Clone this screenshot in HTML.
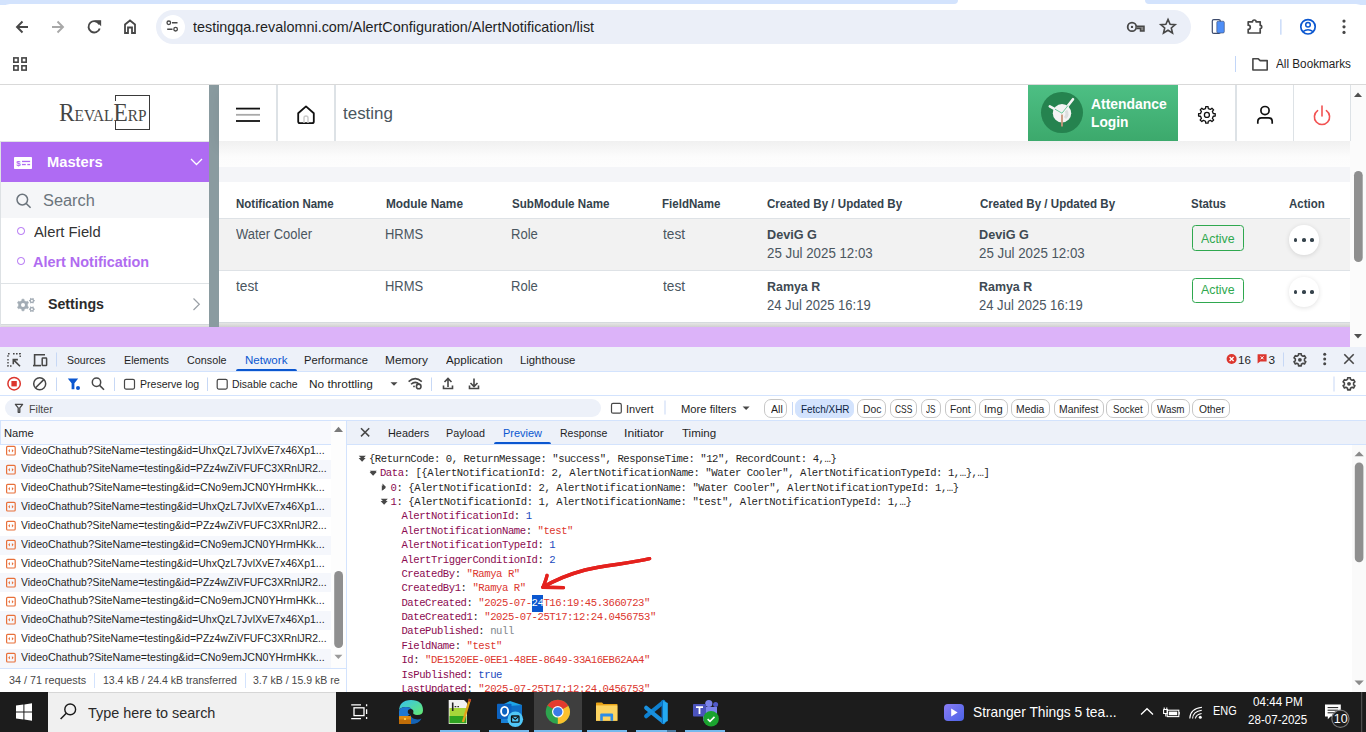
<!DOCTYPE html>
<html><head><meta charset="utf-8">
<style>
*{box-sizing:border-box;margin:0;padding:0}
html,body{width:1366px;height:732px;overflow:hidden;background:#fff;font-family:"Liberation Sans",sans-serif;position:relative}
.a{position:absolute}
.t{position:absolute;white-space:nowrap;line-height:1}
svg{position:absolute;overflow:visible}
.badge{width:52px;height:25.5px;border:1.2px solid #2fa84f;border-radius:3.5px}
.dots{width:29.5px;height:29.5px;border-radius:50%;background:#fff;box-shadow:0 1px 5px rgba(0,0,0,0.12)}
.dots i{position:absolute;top:12.9px;width:3.7px;height:3.7px;border-radius:50%;background:#36434c}
.dots i:nth-child(1){left:4.7px}.dots i:nth-child(2){left:12.9px}.dots i:nth-child(3){left:21.2px}
.fb{position:absolute;top:399px;height:18.6px;border:1px solid #c7c7c7;border-radius:7px}
</style></head><body>
<!-- ===== CHROME ===== -->
<div class="a" style="left:0;top:0;width:1366px;height:5px;background:#d3e3fd"></div>
<div class="a" style="left:950px;top:0;width:200px;height:6px;background:#fff;border-radius:0 0 0 0"></div>
<div class="a" style="left:942px;top:0;width:16px;height:4px;background:#d3e3fd;border-radius:0 0 10px 0"></div>
<div class="a" style="left:1145px;top:0;width:16px;height:4px;background:#d3e3fd;border-radius:0 0 0 10px"></div>
<div class="a" style="left:0;top:4px;width:1366px;height:80px;background:#fff;border-radius:10px 10px 0 0"></div>
<!-- nav icons -->
<svg style="left:0;top:0" width="160" height="50">
 <path d="M28 27H17.5M22.5 21.5L17 27L22.5 32.5" fill="none" stroke="#474747" stroke-width="1.9"/>
 <path d="M52 27H62.5M57.5 21.5L63 27L57.5 32.5" fill="none" stroke="#a8a8a8" stroke-width="1.9"/>
 <path d="M99.3 24.2A5.7 5.7 0 1 0 99.7 28.5" fill="none" stroke="#474747" stroke-width="1.9"/>
 <path d="M96.5 20.8L100.5 20.8L100.5 24.8Z" fill="#474747" stroke="#474747" stroke-width="1.3"/>
 <path d="M125 33V24.5L130 20.5L135 24.5V33H132V27.5H128V33Z" fill="none" stroke="#474747" stroke-width="1.8" stroke-linejoin="miter"/>
</svg>
<!-- omnibox -->
<div class="a" style="left:156px;top:10px;width:1035px;height:34px;border-radius:17px;background:#ebeff8"></div>
<div class="a" style="left:161px;top:15px;width:24px;height:24px;border-radius:12px;background:#fff"></div>
<svg style="left:160px;top:14px" width="26" height="26">
 <circle cx="8.8" cy="8.8" r="1.8" fill="none" stroke="#474747" stroke-width="1.3"/>
 <path d="M12 8.8H17.5M7.2 15.2H12.5" stroke="#474747" stroke-width="1.5"/>
 <circle cx="15.6" cy="15.2" r="1.8" fill="none" stroke="#474747" stroke-width="1.3"/>
</svg>
<svg style="left:1110px;top:10px" width="256" height="40">
 <circle cx="22" cy="16.9" r="4.3" fill="none" stroke="#474747" stroke-width="1.8"/>
 <circle cx="22" cy="16.9" r="1.2" fill="#474747"/>
 <path d="M26.5 16.2H34V21H30.5V18.6H26.5" fill="#8a8a8a" stroke="#474747" stroke-width="1.5"/>
 <path d="M58 9.4L60.1 14.2L65.2 14.6L61.3 18L62.5 23L58 20.3L53.5 23L54.7 18L50.8 14.6L55.9 14.2Z" fill="none" stroke="#474747" stroke-width="1.6" stroke-linejoin="miter"/>
 <rect x="102.3" y="9.6" width="8" height="13.8" rx="1.5" fill="#fff" stroke="#3c4a6b" stroke-width="1.2"/>
 <rect x="106.8" y="11.2" width="7.5" height="11.8" rx="1.3" fill="#4e8ef7" stroke="#3c4a6b" stroke-width="0.6"/>
 <path d="M138.2 11.8H142.5A1.8 1.8 0 0 1 146.1 11.8H150.2V15.3A1.6 1.6 0 0 1 150.2 18.5V23H138.2V19.4A2.1 2.1 0 0 0 138.2 15.2Z" fill="none" stroke="#474747" stroke-width="1.7" stroke-linejoin="round"/>
 <rect x="170.2" y="9.3" width="1.3" height="15.4" fill="#c2d6f8"/>
 <circle cx="198" cy="16.8" r="7.2" fill="none" stroke="#0b57d0" stroke-width="1.7"/>
 <circle cx="198" cy="14.8" r="2.3" fill="none" stroke="#0b57d0" stroke-width="1.5"/>
 <path d="M193 21.6Q198 17.8 203 21.6" fill="none" stroke="#0b57d0" stroke-width="1.5"/>
 <circle cx="234" cy="11.1" r="1.6" fill="#474747"/><circle cx="234" cy="16.8" r="1.6" fill="#474747"/><circle cx="234" cy="22.4" r="1.6" fill="#474747"/>
</svg>
<!-- bookmarks bar -->
<svg style="left:0;top:48px" width="40" height="30">
 <rect x="13.8" y="9.9" width="4.3" height="4.3" fill="none" stroke="#474747" stroke-width="1.6"/>
 <rect x="21.9" y="9.9" width="4.3" height="4.3" fill="none" stroke="#474747" stroke-width="1.6"/>
 <rect x="13.8" y="17.8" width="4.3" height="4.3" fill="none" stroke="#474747" stroke-width="1.6"/>
 <rect x="21.9" y="17.8" width="4.3" height="4.3" fill="none" stroke="#474747" stroke-width="1.6"/>
</svg>
<div class="a" style="left:1235px;top:56px;width:1.2px;height:16px;background:#c2d6f8"></div>
<svg style="left:1250px;top:55px" width="22" height="18">
 <path d="M2.9 3.8H8.3L10.2 5.6H17.2V15H2.9Z" fill="none" stroke="#474747" stroke-width="1.6" stroke-linejoin="round"/>
</svg>
<div class="a" style="left:0;top:84px;width:1366px;height:1px;background:#d9d9d9"></div>

<!-- ===== PAGE ===== -->
<div class="a" style="left:0;top:85px;width:1350px;height:262px;background:#fff;overflow:hidden">
 <!-- sidebar -->
 <div class="a" style="left:0;top:55.5px;width:209px;height:1.5px;background:#dfe3e6"></div>
 <!-- logo -->
 <div class="a" style="left:114.8px;top:10.3px;width:35.2px;height:34.3px;border:1.5px solid #3a3a3a"></div>
 <div class="a" style="left:112px;top:16px;width:8px;height:20px;background:#fff"></div>
 <!-- masters -->
 <div class="a" style="left:0;top:57px;width:209px;height:40px;background:#af6bf3"></div>
 <svg style="left:0;top:57px" width="40" height="40">
  <rect x="14" y="15" width="18" height="12" rx="0.8" fill="#fff"/>
  <text x="18.5" y="23.7" text-anchor="middle" font-size="8" font-family="Liberation Sans" font-weight="bold" fill="#af6bf3">$</text>
  <rect x="22" y="18.8" width="8.1" height="1.3" fill="#af6bf3"/>
  <rect x="22" y="21.9" width="3.8" height="1.3" fill="#af6bf3"/>
  <rect x="27.3" y="21.9" width="2.8" height="1.3" fill="#af6bf3"/>
 </svg>
 <svg style="left:185px;top:67px" width="24" height="20">
  <path d="M6 7L11.5 12.5L17 7" fill="none" stroke="#fff" stroke-width="1.3"/>
 </svg>
 <!-- search -->
 <div class="a" style="left:0;top:97px;width:209px;height:35.5px;background:#f5f6f8"></div>
 <svg style="left:10px;top:103px" width="30" height="26">
  <circle cx="12.3" cy="11.6" r="5.3" fill="none" stroke="#6c757d" stroke-width="1.5"/>
  <path d="M16.2 15.5L20.6 19.8" stroke="#6c757d" stroke-width="1.6"/>
 </svg>
 <!-- submenu -->
 <div class="a" style="left:17.4px;top:142px;width:7.6px;height:7.6px;border-radius:50%;border:1.4px solid #af6bf3"></div>
 <div class="a" style="left:17.4px;top:172.4px;width:7.6px;height:7.6px;border-radius:50%;border:1.4px solid #af6bf3"></div>
 <div class="a" style="left:0;top:198px;width:209px;height:1px;background:#dfe3e6"></div>
 <!-- settings -->
 <svg style="left:12px;top:210px" width="30" height="22">
  <path d="M9.79 5.67L9.96 4.19L12.04 4.19L12.21 5.67L14.15 6.78L15.51 6.19L16.55 8.00L15.36 8.88L15.36 11.12L16.55 12.00L15.51 13.81L14.15 13.22L12.21 14.33L12.04 15.81L9.96 15.81L9.79 14.33L7.85 13.22L6.49 13.81L5.45 12.00L6.64 11.12L6.64 8.88L5.45 8.00L6.49 6.19L7.85 6.78Z" fill="#a3acb5" stroke="#a3acb5" stroke-width="0.6" stroke-linejoin="round"/>
  <circle cx="11" cy="10" r="2" fill="#fff"/>
  <path d="M20.45 3.47L20.89 2.87L21.86 3.43L21.56 4.11L22.11 5.06L22.85 5.14L22.85 6.26L22.11 6.34L21.56 7.29L21.86 7.97L20.89 8.53L20.45 7.93L19.35 7.93L18.91 8.53L17.94 7.97L18.24 7.29L17.69 6.34L16.95 6.26L16.95 5.14L17.69 5.06L18.24 4.11L17.94 3.43L18.91 2.87L19.35 3.47Z" fill="#a3acb5"/>
  <circle cx="19.9" cy="5.7" r="1" fill="#fff"/>
  <path d="M20.45 11.97L20.89 11.37L21.86 11.93L21.56 12.61L22.11 13.56L22.85 13.64L22.85 14.76L22.11 14.84L21.56 15.79L21.86 16.47L20.89 17.03L20.45 16.43L19.35 16.43L18.91 17.03L17.94 16.47L18.24 15.79L17.69 14.84L16.95 14.76L16.95 13.64L17.69 13.56L18.24 12.61L17.94 11.93L18.91 11.37L19.35 11.97Z" fill="#a3acb5"/>
  <circle cx="19.9" cy="14.2" r="1" fill="#fff"/>
 </svg>
 <svg style="left:186px;top:208px" width="20" height="24">
  <path d="M7.5 5.5L13.3 11.3L7.5 17" fill="none" stroke="#9aa0a6" stroke-width="1.2"/>
 </svg>
 <div class="a" style="left:0;top:239px;width:209px;height:1px;background:#d5d9dc"></div>
 <div class="a" style="left:0;top:240px;width:209px;height:2px;background:linear-gradient(#e8e8e8,#d8d8d8)"></div>
 <div class="a" style="left:0;top:56px;width:1px;height:186px;background:#dde1e4"></div>
 <!-- sidebar scroll bar -->
 <div class="a" style="left:209px;top:0;width:10px;height:242px;background:#8a9ba0"></div>

 <!-- header -->
 <div class="a" style="left:219px;top:0;width:1131px;height:56px;background:#fff;box-shadow:0 6px 14px rgba(0,0,0,0.07)"></div>
 <div class="a" style="left:219px;top:56px;width:1131px;height:26px;background:linear-gradient(#f0f0f0,#fcfcfc 60%,#fdfdfd)"></div>
 <div class="a" style="left:219px;top:82px;width:1131px;height:15px;background:#f4f5f8"></div>
 <div class="a" style="left:276px;top:0;width:1.5px;height:56px;background:#dde2e6"></div>
 <div class="a" style="left:334px;top:0;width:1.5px;height:56px;background:#dde2e6"></div>
 <svg style="left:230px;top:15px" width="36" height="30">
  <path d="M6 8.6H30" stroke="#111" stroke-width="1.8"/>
  <path d="M6 14.8H30" stroke="#a9a9a9" stroke-width="1.8"/>
  <path d="M6 21H30" stroke="#111" stroke-width="1.8"/>
 </svg>
 <svg style="left:290px;top:15px" width="32" height="30">
  <path d="M8.2 13.2L16 6.4L23.8 13.2V21.5Q23.8 23.2 22.1 23.2H9.9Q8.2 23.2 8.2 21.5Z" fill="none" stroke="#111" stroke-width="1.8" stroke-linejoin="round"/>
  <path d="M14 23V17.8Q14 16 16 16Q18 16 18 17.8V23" fill="none" stroke="#c9c9c9" stroke-width="1.4"/>
 </svg>
 <!-- attendance btn -->
 <div class="a" style="left:1028px;top:0;width:150px;height:56px;background:linear-gradient(#4dbf84,#3ca96c)"></div>
 <div class="a" style="left:1041px;top:6.8px;width:41.6px;height:41.6px;border-radius:50%;background:#25834f"></div>
 <svg style="left:1040px;top:6px" width="44" height="44">
  <circle cx="22" cy="22.2" r="9.2" fill="#f4f4f4"/>
  <path d="M26 19.5A6 6 0 0 1 25 27" fill="none" stroke="#dcdede" stroke-width="3"/>
  <path d="M22 22.2V35.5" stroke="#c9967a" stroke-width="1.8"/>
  <path d="M22 22.2L33 8.2" stroke="#f4f4f4" stroke-width="2.6" stroke-linecap="round"/>
  <path d="M22 22.2L9.8 15.3" stroke="#f4f4f4" stroke-width="2.6" stroke-linecap="round"/>
  <path d="M22 22.2L28 14.5M22 22.2L15 18.2" stroke="#4dbf84" stroke-width="0.8"/>
 </svg>
 <div class="a" style="left:1235.3px;top:0;width:1.5px;height:56px;background:#dde2e6"></div>
 <div class="a" style="left:1292.6px;top:0;width:1.5px;height:56px;background:#dde2e6"></div>
 <svg style="left:1192px;top:15px" width="30" height="30">
  <path d="M13.53 8.55L13.72 6.58L16.08 6.58L16.27 8.55L18.43 9.44L19.94 8.18L21.62 9.86L20.36 11.37L21.25 13.53L23.22 13.72L23.22 16.08L21.25 16.27L20.36 18.43L21.62 19.94L19.94 21.62L18.43 20.36L16.27 21.25L16.08 23.22L13.72 23.22L13.53 21.25L11.37 20.36L9.86 21.62L8.18 19.94L9.44 18.43L8.55 16.27L6.58 16.08L6.58 13.72L8.55 13.53L9.44 11.37L8.18 9.86L9.86 8.18L11.37 9.44Z" fill="none" stroke="#111" stroke-width="1.3" stroke-linejoin="round"/>
  <circle cx="14.9" cy="14.9" r="2.5" fill="none" stroke="#111" stroke-width="1.3"/>
 </svg>
 <svg style="left:1250px;top:15px" width="30" height="30">
  <circle cx="15" cy="10.6" r="4.1" fill="none" stroke="#111" stroke-width="1.7"/>
  <path d="M7.8 23.7V21.6Q7.8 17.8 11.6 17.8H18.4Q22.2 17.8 22.2 21.6V23.7" fill="none" stroke="#111" stroke-width="1.7"/>
 </svg>
 <svg style="left:1307px;top:15px" width="30" height="30">
  <path d="M10.6 10.7A7.6 7.6 0 1 0 19.4 10.7" fill="none" stroke="#f25252" stroke-width="1.6" stroke-linecap="round"/>
  <path d="M15 6V16" stroke="#f25252" stroke-width="1.6" stroke-linecap="round"/>
 </svg>

 <!-- table -->
 <div class="a" style="left:219px;top:97px;width:1131px;height:140px;background:#fff"></div>
 <div class="a" style="left:219px;top:133px;width:1131px;height:1px;background:#dee2e6"></div>
 <div class="a" style="left:219px;top:134px;width:1131px;height:51px;background:#f2f2f2"></div>
 <div class="a" style="left:219px;top:185px;width:1131px;height:1px;background:#dee2e6"></div>
 <div class="a badge" style="left:1192px;top:140.3px"></div>
 <div class="a dots" style="left:1289px;top:140.4px"><i></i><i></i><i></i></div>
 <div class="a badge" style="left:1192px;top:192.5px"></div>
 <div class="a dots" style="left:1289px;top:192.4px"><i></i><i></i><i></i></div>
 <div class="a" style="left:219px;top:237px;width:1131px;height:1px;background:#d5dadd"></div>
 <div class="a" style="left:219px;top:238px;width:1131px;height:4px;background:linear-gradient(#e6e6e6,#d0d0d0)"></div>
 <!-- purple band -->
 <div class="a" style="left:0;top:242px;width:1350px;height:20px;background:#dcb3f9"></div>
</div>
<!-- page scrollbar -->
<div class="a" style="left:1350px;top:85px;width:16px;height:262px;background:#fbfbfb"></div><div class="a" style="left:1349.5px;top:85px;width:1px;height:56px;background:#dde2e6"></div>
<svg style="left:1350px;top:85px" width="16" height="262">
 <path d="M4 12L8 7.5L12 12Z" fill="#505050"/>
 <rect x="4" y="86" width="8.7" height="91" rx="4.3" fill="#8f8f8f"/>
 <path d="M4 249L8 253.5L12 249Z" fill="#505050"/>
</svg>

<!-- ===== DEVTOOLS ===== -->
<div class="a" style="left:0;top:347px;width:1366px;height:24.5px;background:#edf1f9"></div>
<div class="a" style="left:0;top:371px;width:1366px;height:1px;background:#d3e3fd"></div>
<svg style="left:0;top:347px" width="60" height="25">
 <path d="M8 9.8V6.8H11" fill="none" stroke="#474747" stroke-width="1.4" stroke-dasharray="1.6 1.4"/>
 <path d="M13 6.8H20.2V10" fill="none" stroke="#474747" stroke-width="1.4" stroke-dasharray="1.6 1.4"/>
 <path d="M8 12V19H11.5" fill="none" stroke="#474747" stroke-width="1.4" stroke-dasharray="1.6 1.4"/>
 <path d="M13.3 17.2V12.6H17.9M13.6 12.9L20 19.3" fill="none" stroke="#474747" stroke-width="1.6"/>
 <path d="M34.6 18.6V7.8H45" fill="none" stroke="#474747" stroke-width="1.6"/>
 <path d="M33 18.6H41" stroke="#474747" stroke-width="1.6"/>
 <rect x="42.2" y="11.1" width="4.4" height="7.4" rx="0.6" fill="none" stroke="#474747" stroke-width="1.5"/>
 <rect x="56" y="5.5" width="1" height="14" fill="#c7d8f5"/>
</svg>
<div class="a" style="left:236px;top:369px;width:60.5px;height:2.2px;background:#0b57d0;border-radius:2px 2px 0 0"></div>
<svg style="left:1220px;top:347px" width="146" height="25">
 <circle cx="11.6" cy="12" r="5" fill="#dc362e"/>
 <path d="M9.6 10L13.6 14M13.6 10L9.6 14" stroke="#fff" stroke-width="1.3"/>
 <path d="M37.6 7.2H46.6V14.5H40.2L37.6 16.5Z" fill="#dc362e"/>
 <path d="M40.6 9.3L43.6 12.3M43.6 9.3L40.6 12.3" stroke="#fff" stroke-width="1"/>
 <rect x="63" y="5.5" width="1" height="14" fill="#c7d8f5"/>
 <path d="M78.45 8.33L78.55 6.75L81.25 6.75L81.35 8.33L83.04 9.31L84.46 8.60L85.82 10.95L84.50 11.82L84.50 13.78L85.82 14.65L84.46 17.00L83.04 16.29L81.35 17.27L81.25 18.85L78.55 18.85L78.45 17.27L76.76 16.29L75.34 17.00L73.98 14.65L75.30 13.78L75.30 11.82L73.98 10.95L75.34 8.60L76.76 9.31Z" fill="none" stroke="#474747" stroke-width="1.6" stroke-linejoin="round"/><circle cx="79.9" cy="12.8" r="1.9" fill="#474747"/>
 <circle cx="104.7" cy="7.2" r="1.5" fill="#474747"/><circle cx="104.7" cy="12" r="1.5" fill="#474747"/><circle cx="104.7" cy="16.8" r="1.5" fill="#474747"/>
 <path d="M124.3 7.3L133.7 16.7M133.7 7.3L124.3 16.7" stroke="#474747" stroke-width="1.6"/>
</svg>
<!-- toolbar 2 -->
<div class="a" style="left:0;top:395px;width:1366px;height:1px;background:#d3e3fd"></div>
<svg style="left:0;top:372px" width="490" height="24">
 <circle cx="14.1" cy="11.7" r="6.2" fill="none" stroke="#dc362e" stroke-width="1.5"/>
 <rect x="11.4" y="9" width="5.4" height="5.4" fill="#dc362e"/>
 <circle cx="39.7" cy="11.7" r="6" fill="none" stroke="#474747" stroke-width="1.5"/>
 <path d="M35.6 15.8L43.8 7.6" stroke="#474747" stroke-width="1.5"/>
 <rect x="56" y="5.5" width="1" height="13.5" fill="#c7d8f5"/>
 <path d="M67.8 6.6H78.2L74.4 11.2V17.3H71.6V11.2Z" fill="#0b57d0"/>
 <circle cx="78" cy="16" r="2" fill="#0b57d0"/>
 <circle cx="96.5" cy="10.3" r="4.2" fill="none" stroke="#474747" stroke-width="1.5"/>
 <path d="M99.6 13.4L104 17.8" stroke="#474747" stroke-width="1.6"/>
 <rect x="114" y="5.5" width="1" height="13.5" fill="#c7d8f5"/>
 <rect x="124.5" y="7.3" width="10" height="9.8" rx="1.5" fill="none" stroke="#474747" stroke-width="1.2"/>
 <rect x="207" y="5.5" width="1" height="13.5" fill="#c7d8f5"/>
 <rect x="217.2" y="7.3" width="10" height="9.8" rx="1.5" fill="none" stroke="#474747" stroke-width="1.2"/>
 <path d="M390.5 10.3H397.5L394 13.8Z" fill="#474747"/>
 <path d="M408.6 9.6Q415.2 3.6 421.8 9.6M411 12.2Q415.2 8.6 419.4 12.2" fill="none" stroke="#474747" stroke-width="1.5"/>
 <circle cx="418.7" cy="14.4" r="2.3" fill="none" stroke="#474747" stroke-width="1.6"/>
 <circle cx="414" cy="14.4" r="0.9" fill="#474747"/>
 <rect x="431" y="5.5" width="1" height="13.5" fill="#c7d8f5"/>
 <path d="M448 7V15M444.5 10L448 6.5L451.5 10" fill="none" stroke="#474747" stroke-width="1.6"/>
 <path d="M443.5 13.5V16.5H452.5V13.5" fill="none" stroke="#474747" stroke-width="1.6"/>
 <path d="M474 6.5V14M470.5 11L474 14.5L477.5 11" fill="none" stroke="#474747" stroke-width="1.6"/>
 <path d="M469.5 13.5V16.5H478.5V13.5" fill="none" stroke="#474747" stroke-width="1.6"/>
</svg>
<svg style="left:1320px;top:372px" width="46" height="24">
 <rect x="13.5" y="4.5" width="1" height="15" fill="#c7d8f5"/>
 <path d="M27.55 7.33L27.65 5.75L30.35 5.75L30.45 7.33L32.14 8.31L33.56 7.60L34.92 9.95L33.60 10.82L33.60 12.78L34.92 13.65L33.56 16.00L32.14 15.29L30.45 16.27L30.35 17.85L27.65 17.85L27.55 16.27L25.86 15.29L24.44 16.00L23.08 13.65L24.40 12.78L24.40 10.82L23.08 9.95L24.44 7.60L25.86 8.31Z" fill="none" stroke="#474747" stroke-width="1.6" stroke-linejoin="round"/><circle cx="29" cy="11.8" r="1.9" fill="#474747"/>
</svg>
<!-- filter row -->
<div class="a" style="left:0;top:420px;width:1366px;height:1px;background:#d3e3fd"></div>
<div class="a" style="left:4.5px;top:399px;width:596px;height:18px;border-radius:9px;background:#edf1f9"></div>
<svg style="left:0;top:396px" width="40" height="24">
 <path d="M15.4 8.3H22.6L19.8 11.8V16.3H18.2V11.8Z" fill="none" stroke="#474747" stroke-width="1.3" stroke-linejoin="round"/>
</svg>
<svg style="left:600px;top:396px" width="170" height="24">
 <rect x="11.5" y="7.4" width="9.8" height="9.8" rx="1.5" fill="none" stroke="#474747" stroke-width="1.2"/>
 <rect x="64.5" y="4.5" width="1" height="14" fill="#c7d8f5"/>
 <path d="M142.6 10.5H149.6L146.1 14Z" fill="#474747"/>
</svg>
<div class="a" style="left:791.5px;top:402px;width:1px;height:13px;background:#c7d8f5"></div>

<div class="fb" style="left:764.4px;width:23.1px"></div>
<div class="fb" style="left:795.0px;width:59.0px;background:#d3e3fd;border-color:#d3e3fd"></div>
<div class="fb" style="left:857.3px;width:29.0px"></div>
<div class="fb" style="left:889.6px;width:27.9px"></div>
<div class="fb" style="left:920.8px;width:20.4px"></div>
<div class="fb" style="left:944.5px;width:31.8px"></div>
<div class="fb" style="left:979.2px;width:29.0px"></div>
<div class="fb" style="left:1010.8px;width:39.2px"></div>
<div class="fb" style="left:1053.6px;width:50.8px"></div>
<div class="fb" style="left:1106.3px;width:42.3px"></div>
<div class="fb" style="left:1150.5px;width:39.9px"></div>
<div class="fb" style="left:1192.3px;width:38.2px"></div>

<!-- left pane -->
<div class="a" style="left:0;top:421px;width:346px;height:271px;background:#fff;overflow:hidden">
 <div class="a" style="left:0;top:20.50px;width:331px;height:19.05px;background:#fff"></div>
 <svg style="left:5px;top:23.80px" width="12" height="12"><rect x="1.6" y="1.4" width="8.6" height="8.6" rx="1.1" fill="none" stroke="#e8703a" stroke-width="1.2"/><path d="M4.9 3.9L3.2 5.7L4.9 7.5Z M6.9 3.9L8.6 5.7L6.9 7.5Z" fill="#e8703a"/></svg>
 <div class="a" style="left:0;top:39.35px;width:331px;height:19.05px;background:#f5f7fc"></div>
 <svg style="left:5px;top:42.65px" width="12" height="12"><rect x="1.6" y="1.4" width="8.6" height="8.6" rx="1.1" fill="none" stroke="#e8703a" stroke-width="1.2"/><path d="M4.9 3.9L3.2 5.7L4.9 7.5Z M6.9 3.9L8.6 5.7L6.9 7.5Z" fill="#e8703a"/></svg>
 <div class="a" style="left:0;top:58.20px;width:331px;height:19.05px;background:#fff"></div>
 <svg style="left:5px;top:61.50px" width="12" height="12"><rect x="1.6" y="1.4" width="8.6" height="8.6" rx="1.1" fill="none" stroke="#e8703a" stroke-width="1.2"/><path d="M4.9 3.9L3.2 5.7L4.9 7.5Z M6.9 3.9L8.6 5.7L6.9 7.5Z" fill="#e8703a"/></svg>
 <div class="a" style="left:0;top:77.05px;width:331px;height:19.05px;background:#f5f7fc"></div>
 <svg style="left:5px;top:80.35px" width="12" height="12"><rect x="1.6" y="1.4" width="8.6" height="8.6" rx="1.1" fill="none" stroke="#e8703a" stroke-width="1.2"/><path d="M4.9 3.9L3.2 5.7L4.9 7.5Z M6.9 3.9L8.6 5.7L6.9 7.5Z" fill="#e8703a"/></svg>
 <div class="a" style="left:0;top:95.90px;width:331px;height:19.05px;background:#fff"></div>
 <svg style="left:5px;top:99.20px" width="12" height="12"><rect x="1.6" y="1.4" width="8.6" height="8.6" rx="1.1" fill="none" stroke="#e8703a" stroke-width="1.2"/><path d="M4.9 3.9L3.2 5.7L4.9 7.5Z M6.9 3.9L8.6 5.7L6.9 7.5Z" fill="#e8703a"/></svg>
 <div class="a" style="left:0;top:114.75px;width:331px;height:19.05px;background:#f5f7fc"></div>
 <svg style="left:5px;top:118.05px" width="12" height="12"><rect x="1.6" y="1.4" width="8.6" height="8.6" rx="1.1" fill="none" stroke="#e8703a" stroke-width="1.2"/><path d="M4.9 3.9L3.2 5.7L4.9 7.5Z M6.9 3.9L8.6 5.7L6.9 7.5Z" fill="#e8703a"/></svg>
 <div class="a" style="left:0;top:133.60px;width:331px;height:19.05px;background:#fff"></div>
 <svg style="left:5px;top:136.90px" width="12" height="12"><rect x="1.6" y="1.4" width="8.6" height="8.6" rx="1.1" fill="none" stroke="#e8703a" stroke-width="1.2"/><path d="M4.9 3.9L3.2 5.7L4.9 7.5Z M6.9 3.9L8.6 5.7L6.9 7.5Z" fill="#e8703a"/></svg>
 <div class="a" style="left:0;top:152.45px;width:331px;height:19.05px;background:#f5f7fc"></div>
 <svg style="left:5px;top:155.75px" width="12" height="12"><rect x="1.6" y="1.4" width="8.6" height="8.6" rx="1.1" fill="none" stroke="#e8703a" stroke-width="1.2"/><path d="M4.9 3.9L3.2 5.7L4.9 7.5Z M6.9 3.9L8.6 5.7L6.9 7.5Z" fill="#e8703a"/></svg>
 <div class="a" style="left:0;top:171.30px;width:331px;height:19.05px;background:#fff"></div>
 <svg style="left:5px;top:174.60px" width="12" height="12"><rect x="1.6" y="1.4" width="8.6" height="8.6" rx="1.1" fill="none" stroke="#e8703a" stroke-width="1.2"/><path d="M4.9 3.9L3.2 5.7L4.9 7.5Z M6.9 3.9L8.6 5.7L6.9 7.5Z" fill="#e8703a"/></svg>
 <div class="a" style="left:0;top:190.15px;width:331px;height:19.05px;background:#f5f7fc"></div>
 <svg style="left:5px;top:193.45px" width="12" height="12"><rect x="1.6" y="1.4" width="8.6" height="8.6" rx="1.1" fill="none" stroke="#e8703a" stroke-width="1.2"/><path d="M4.9 3.9L3.2 5.7L4.9 7.5Z M6.9 3.9L8.6 5.7L6.9 7.5Z" fill="#e8703a"/></svg>
 <div class="a" style="left:0;top:209.00px;width:331px;height:19.05px;background:#fff"></div>
 <svg style="left:5px;top:212.30px" width="12" height="12"><rect x="1.6" y="1.4" width="8.6" height="8.6" rx="1.1" fill="none" stroke="#e8703a" stroke-width="1.2"/><path d="M4.9 3.9L3.2 5.7L4.9 7.5Z M6.9 3.9L8.6 5.7L6.9 7.5Z" fill="#e8703a"/></svg>
 <div class="a" style="left:0;top:227.85px;width:331px;height:19.05px;background:#f5f7fc"></div>
 <svg style="left:5px;top:231.15px" width="12" height="12"><rect x="1.6" y="1.4" width="8.6" height="8.6" rx="1.1" fill="none" stroke="#e8703a" stroke-width="1.2"/><path d="M4.9 3.9L3.2 5.7L4.9 7.5Z M6.9 3.9L8.6 5.7L6.9 7.5Z" fill="#e8703a"/></svg>
 <div class="a" style="left:0;top:0;width:346px;height:24px;background:#f8f9fd;border-bottom:1px solid #d3e3fd;border-left:1px solid #d3e3fd"></div>
 <div class="a" style="left:331px;top:0;width:15px;height:271px;background:#fdfdfd"></div>
 <svg style="left:331px;top:0" width="15" height="271"><path d="M3 10.9L7.5 5.7L12 10.9Z" fill="#7a7a7a"/><rect x="3.2" y="150" width="8.8" height="77" rx="4.4" fill="#8f8f8f"/><path d="M3.4 233.8L7.4 238.1L11.4 233.8Z" fill="#9a9a9a"/></svg>
 <div class="a" style="left:0;top:246.5px;width:346px;height:1px;background:#d3e3fd"></div>
 <div class="a" style="left:0;top:247.5px;width:346px;height:24px;background:#fff"></div>
 <div class="a" style="left:94.3px;top:252px;width:1px;height:15px;background:#d3e3fd"></div>
 <div class="a" style="left:245px;top:252px;width:1px;height:15px;background:#d3e3fd"></div>
</div>
<div class="a" style="left:346px;top:421px;width:1px;height:271px;background:#d3e3fd"></div>
<!-- right pane -->
<div class="a" style="left:347px;top:421px;width:1019px;height:24px;background:#edf1f9;border-bottom:1px solid #d3e3fd"></div>
<svg style="left:347px;top:421px" width="30" height="23">
 <path d="M14 7.2L22.2 15.4M22.2 7.2L14 15.4" stroke="#474747" stroke-width="1.5"/>
</svg>
<div class="a" style="left:494px;top:442px;width:57.2px;height:2.2px;background:#0b57d0;border-radius:2px 2px 0 0"></div>
<div class="a" style="left:347px;top:445px;width:1019px;height:247px;background:#fff;overflow:hidden" id="json">
 <svg style="left:10.9px;top:9.40px" width="10" height="8"><path d="M0.8 1.8H7.8L4.3 5.6Z" fill="#474747"/></svg>
 <svg style="left:21.9px;top:23.74px" width="10" height="8"><path d="M0.8 1.8H7.8L4.3 5.6Z" fill="#474747"/></svg>
 <svg style="left:33.6px;top:37.08px" width="8" height="10"><path d="M1.5 1.5V8.5L5 5Z" fill="#474747"/></svg>
 <svg style="left:32.6px;top:52.42px" width="10" height="8"><path d="M0.8 1.8H7.8L4.3 5.6Z" fill="#474747"/></svg>
 <svg style="left:0;top:0" width="1019" height="247"><path d="M302.6 113.7 C283.0 118.5 258.0 120.0 238.0 125.0 C223.0 129.0 208.0 135.0 196.0 142.3" fill="none" stroke="#e4211d" stroke-width="3.4" stroke-linecap="round"/><path d="M200.0 130.5 Q199.0 135.0 196.0 142.3 L216.4 142.6" fill="none" stroke="#e4211d" stroke-width="3.4" stroke-linecap="round" stroke-linejoin="round"/></svg>
</div>
<div class="a" style="left:1352px;top:445px;width:14px;height:247px;background:#fafafa"></div>
<svg style="left:1352px;top:445px" width="14" height="247">
 <path d="M2.5 11.2L7.2 6.5L11.8 11.2Z" fill="#8a8a8a"/>
 <rect x="2.8" y="17.4" width="8.6" height="99.8" rx="4.3" fill="#8f8f8f"/>
 <path d="M2.5 235.5L7.2 240.2L11.8 235.5Z" fill="#8a8a8a"/>
</svg>

<!-- ===== TASKBAR ===== -->
<div class="a" style="left:0;top:692px;width:1366px;height:40px;background:#1c1c1c"></div>
<svg style="left:0;top:692px" width="48" height="40">
 <path d="M16 13.6L23.4 12.6V19.5H16ZM24.4 12.4L32 11.3V19.5H24.4ZM16 20.5H23.4V27.4L16 26.4ZM24.4 20.5H32V28.7L24.4 27.6Z" fill="#fff"/>
</svg>
<div class="a" style="left:48px;top:692px;width:287.5px;height:40px;background:#f0f0f0;border-top:1px solid #d6d6d6"></div>
<svg style="left:48px;top:692px" width="40" height="40">
 <circle cx="22.2" cy="17.4" r="5.4" fill="none" stroke="#1a1a1a" stroke-width="1.4"/>
 <path d="M18.3 21.3L12.6 27" stroke="#1a1a1a" stroke-width="1.5"/>
</svg>
<!-- task view -->
<svg style="left:336px;top:692px" width="48" height="40">
 <rect x="18" y="15.8" width="10" height="7.8" fill="none" stroke="#fff" stroke-width="1.3"/>
 <path d="M15.2 12.8H25M15.2 26.6H25M30.6 12.2V14.2M30.6 17.2V22M30.6 25V27" stroke="#fff" stroke-width="1.3"/>
</svg>
<!-- edge -->
<svg style="left:386px;top:692px" width="48" height="40">
 <defs>
  <linearGradient id="eg1" x1="0" y1="0" x2="1" y2="1"><stop offset="0" stop-color="#35c1f1"/><stop offset="1" stop-color="#66eb6e"/></linearGradient>
 </defs>
 <path d="M13 19.6Q13 8 25 8Q37 8 37 18.5Q37 23 31 23Q27 23 26 19Q26 15 20 15Q13 15 13 19.6Z" fill="url(#eg1)"/>
 <path d="M13 19.6Q13 15 20 15Q26 15 26 19Q26 22 24 22.5Q20 24 20 28Q20 31 25 32Q16 32 13 24Z" fill="#1e78d2"/>
 <path d="M25 32Q33 32 35.5 26.5Q32 28 29 27Q25 26 24.5 23Q22 25 24 29Z" fill="#1463b6"/>
 <circle cx="24.6" cy="19.7" r="2.8" fill="#1c1c1c"/>
 <rect x="13" y="24" width="12" height="8" rx="0.6" fill="#e08a10"/>
 <rect x="13" y="27.5" width="12" height="4.5" fill="#c06d08"/>
 <rect x="18" y="26" width="2" height="2" fill="#f5c542"/>
</svg>
<!-- notepad++ -->
<svg style="left:436px;top:692px" width="48" height="40">
 <path d="M12.7 8H28L31 11V32H12.7Z" fill="#f2f2f2"/>
 <rect x="13.5" y="16" width="16.8" height="15.2" fill="#a6d63a"/>
 <rect x="13.5" y="24" width="16.8" height="7.2" fill="#2ea321"/>
 <path d="M16.7 10.5V19" stroke="#222" stroke-width="1.6"/>
 <path d="M18.6 14.7H20.3M21.4 14.7H23" stroke="#333" stroke-width="1.3"/>
 <path d="M34 7L27 30" stroke="#e2a218" stroke-width="2.4"/>
 <path d="M34 7L33.2 9.6" stroke="#c73a2e" stroke-width="2.4"/>
</svg>
<!-- outlook -->
<svg style="left:485px;top:692px" width="48" height="40">
 <path d="M19 12L25 8.9L37 13V26H19Z" fill="#1ea5e8"/>
 <path d="M24.5 14L37 13V27H24.5Z" fill="#0f6fc6"/>
 <path d="M16 31H32V26H16Z" fill="#1780d6"/>
 <rect x="12" y="11.8" width="14.5" height="15.2" rx="0.8" fill="#0c62c0"/>
 <ellipse cx="19.6" cy="19.3" rx="3.5" ry="4.4" fill="none" stroke="#fff" stroke-width="1.9"/>
 <circle cx="30.3" cy="27.2" r="7.8" fill="#50c7f8"/>
 <rect x="26.5" y="24" width="7.5" height="6.2" rx="0.8" fill="none" stroke="#111" stroke-width="1.3"/>
 <path d="M26.8 24.6L30.2 27.5L33.6 24.6" fill="none" stroke="#111" stroke-width="1.1"/>
</svg>
<!-- chrome -->
<div class="a" style="left:534px;top:692px;width:48px;height:40px;background:#3e3e3e"></div>
<svg style="left:534px;top:692px" width="48" height="40">
 <circle cx="23.8" cy="19.8" r="12.1" fill="#2da44e"/>
 <path d="M23.8 19.8L13.3 13.75A12.1 12.1 0 0 1 34.3 13.75Z" fill="#e33b2e"/>
 <path d="M23.8 19.8L34.3 13.75A12.1 12.1 0 0 1 23.8 31.9Z" fill="#fbc02d"/>
 <path d="M23.8 19.8L13.3 13.75L18.6 22.8Z" fill="#2da44e"/>
 <path d="M23.8 19.8L34.3 13.75H23.8Z" fill="#e33b2e"/>
 <circle cx="23.8" cy="19.8" r="5.8" fill="#fff"/>
 <circle cx="23.8" cy="19.8" r="4.6" fill="#3a7be8"/>
</svg>
<!-- explorer -->
<svg style="left:583px;top:692px" width="48" height="40">
 <path d="M13 11.3Q13 10.5 13.8 10.5H19L20.5 12H34.4V28.8H13Z" fill="#e8a317"/>
 <rect x="13" y="13.4" width="21.4" height="15.4" fill="#fcd462"/>
 <path d="M17.2 28.8V22.5Q17.2 21.4 18.3 21.4H29Q30.1 21.4 30.1 22.5V28.8H27.5V24.4H19.8V28.8Z" fill="#2d8ce6"/>
</svg>
<!-- vscode -->
<svg style="left:632px;top:692px" width="48" height="40">
 <path d="M31.5 10L14.2 24.2" stroke="#0e80d0" stroke-width="4.2" stroke-linecap="round"/>
 <path d="M31.5 30L14.2 15.8" stroke="#1990de" stroke-width="4.2" stroke-linecap="round"/>
 <path d="M29.8 8.2L35.8 11V29L29.8 31.8Z" fill="#24a9f2"/>
 <path d="M29.8 8.2L31 8.6V31.4L29.8 31.8Z" fill="#0a6fc2"/>
</svg>
<!-- teams -->
<svg style="left:681px;top:692px" width="48" height="40">
 <circle cx="27.8" cy="11.5" r="3.6" fill="#7b83eb"/>
 <circle cx="34.6" cy="12.6" r="2.5" fill="#5059c9"/>
 <path d="M22 15H36V26Q36 32 29 32Q22 32 22 26Z" fill="#7b83eb"/>
 <rect x="12" y="12" width="13" height="12.6" rx="0.8" fill="#4b53bc"/>
 <path d="M15 15.2H22M18.5 15.2V22" stroke="#fff" stroke-width="1.8"/>
 <circle cx="30.1" cy="26.8" r="7.8" fill="#1aa32e"/>
 <path d="M26.6 27.2L29 29.4L33.5 24.9" fill="none" stroke="#fff" stroke-width="1.6"/>
</svg>
<!-- running indicators -->
<div class="a" style="left:440px;top:730px;width:40px;height:2px;background:#76b9ed"></div>
<div class="a" style="left:489px;top:730px;width:40px;height:2px;background:#76b9ed"></div>
<div class="a" style="left:534px;top:730px;width:48px;height:2px;background:#76b9ed"></div>
<div class="a" style="left:587px;top:730px;width:40px;height:2px;background:#76b9ed"></div>
<div class="a" style="left:636px;top:730px;width:31px;height:2px;background:#76b9ed"></div>
<div class="a" style="left:667px;top:730px;width:9px;height:2px;background:#4b7aa0"></div>
<div class="a" style="left:685px;top:730px;width:40px;height:2px;background:#76b9ed"></div>
<!-- media -->
<div class="a" style="left:943.5px;top:703.8px;width:20.5px;height:17px;border-radius:4px;background:linear-gradient(135deg,#8a7cf5,#4a63e6)"></div>
<svg style="left:943px;top:703px" width="22" height="19">
 <path d="M8.2 5.4V13.6L14.6 9.5Z" fill="#fff"/>
</svg>
<svg style="left:1130px;top:692px" width="80" height="40">
 <path d="M11 22.5L17 16.7L23 22.5" fill="none" stroke="#fff" stroke-width="1.3"/>
 <path d="M33.6 17.5V21.5H35.8V24.6M33.2 17.5H37.4V21.5H35.6M34.2 15.5V17.5M36.8 15.5V17.5" fill="none" stroke="#fff" stroke-width="1.1"/>
 <rect x="37.2" y="18.2" width="11.6" height="6.4" fill="none" stroke="#fff" stroke-width="1.1"/>
 <rect x="38.8" y="19.6" width="8.4" height="3.6" fill="#fff"/>
 <rect x="49" y="20" width="0.8" height="2.6" fill="#fff"/>
 <path d="M59.8 26.5Q60 16.5 72 15.2M62.6 26.5Q63 19.5 71.8 18.3M65.4 26.5Q66 22.5 71.6 21.5" fill="none" stroke="#fff" stroke-width="1.1"/>
 <circle cx="70.3" cy="25.3" r="1.5" fill="#fff"/>
</svg>
<svg style="left:1320px;top:692px" width="46" height="40">
 <path d="M5 12.5H20.8V24.6H10.5L7.8 27.2V24.6H5Z" fill="#fff"/>
 <path d="M7.6 15.6H18.2M7.6 18.2H18.2M7.6 20.8H14" stroke="#1c1c1c" stroke-width="1"/>
 <circle cx="20.4" cy="26.8" r="8.6" fill="#1c1c1c" stroke="#777" stroke-width="1.2"/>
 <rect x="41.2" y="0" width="1" height="40" fill="#5a5a5a"/>
</svg>

<div class="a" style="left:347px;top:445px;width:1005px;height:247px;overflow:hidden">
 <div class="t" id="j0" style="left:21.90px;top:8.88px;font-family:'Liberation Mono',monospace;font-size:10.6px;letter-spacing:-0.44px;color:#1f1f1f"><span style="color:#1f1f1f">{ReturnCode: 0, ReturnMessage: "success", ResponseTime: "12", RecordCount: 4,…}</span></div>
 <svg style="left:10.9px;top:10.80px" width="10" height="8"><path d="M0.6 1.9H7.6L4.1 5.7Z" fill="#474747"/></svg>
 <div class="t" id="j1" style="left:32.90px;top:23.26px;font-family:'Liberation Mono',monospace;font-size:10.6px;letter-spacing:-0.44px;color:#1f1f1f"><span style="color:#8b0a50">Data</span><span style="color:#1f1f1f">: [{AlertNotificationId: 2, AlertNotificationName: "Water Cooler", AlertNotificationTypeId: 1,…},…]</span></div>
 <svg style="left:21.9px;top:25.18px" width="10" height="8"><path d="M0.6 1.9H7.6L4.1 5.7Z" fill="#474747"/></svg>
 <div class="t" id="j2" style="left:43.60px;top:37.64px;font-family:'Liberation Mono',monospace;font-size:10.6px;letter-spacing:-0.44px;color:#1f1f1f"><span style="color:#8b0a50">0</span><span style="color:#1f1f1f">: {AlertNotificationId: 2, AlertNotificationName: "Water Cooler", AlertNotificationTypeId: 1,…}</span></div>
 <svg style="left:33.6px;top:38.56px" width="8" height="10"><path d="M0.8 1.2V6.8L4.6 4Z" fill="#474747"/></svg>
 <div class="t" id="j3" style="left:43.60px;top:52.02px;font-family:'Liberation Mono',monospace;font-size:10.6px;letter-spacing:-0.44px;color:#1f1f1f"><span style="color:#8b0a50">1</span><span style="color:#1f1f1f">: {AlertNotificationId: 1, AlertNotificationName: "test", AlertNotificationTypeId: 1,…}</span></div>
 <svg style="left:32.6px;top:53.94px" width="10" height="8"><path d="M0.6 1.9H7.6L4.1 5.7Z" fill="#474747"/></svg>
 <div class="t" id="j4" style="left:54.40px;top:66.40px;font-family:'Liberation Mono',monospace;font-size:10.6px;letter-spacing:-0.44px;color:#1f1f1f"><span style="color:#8b0a50">AlertNotificationId</span><span style="color:#1f1f1f">: </span><span style="color:#1a49bd">1</span></div>
 <div class="t" id="j5" style="left:54.40px;top:80.78px;font-family:'Liberation Mono',monospace;font-size:10.6px;letter-spacing:-0.44px;color:#1f1f1f"><span style="color:#8b0a50">AlertNotificationName</span><span style="color:#1f1f1f">: </span><span style="color:#dc362e">"test"</span></div>
 <div class="t" id="j6" style="left:54.40px;top:95.16px;font-family:'Liberation Mono',monospace;font-size:10.6px;letter-spacing:-0.44px;color:#1f1f1f"><span style="color:#8b0a50">AlertNotificationTypeId</span><span style="color:#1f1f1f">: </span><span style="color:#1a49bd">1</span></div>
 <div class="t" id="j7" style="left:54.40px;top:109.54px;font-family:'Liberation Mono',monospace;font-size:10.6px;letter-spacing:-0.44px;color:#1f1f1f"><span style="color:#8b0a50">AlertTriggerConditionId</span><span style="color:#1f1f1f">: </span><span style="color:#1a49bd">2</span></div>
 <div class="t" id="j8" style="left:54.40px;top:123.92px;font-family:'Liberation Mono',monospace;font-size:10.6px;letter-spacing:-0.44px;color:#1f1f1f"><span style="color:#8b0a50">CreatedBy</span><span style="color:#1f1f1f">: </span><span style="color:#dc362e">"Ramya R"</span></div>
 <div class="t" id="j9" style="left:54.40px;top:138.30px;font-family:'Liberation Mono',monospace;font-size:10.6px;letter-spacing:-0.44px;color:#1f1f1f"><span style="color:#8b0a50">CreatedBy1</span><span style="color:#1f1f1f">: </span><span style="color:#dc362e">"Ramya R"</span></div>
 <div class="t" id="j10" style="left:54.40px;top:152.68px;font-family:'Liberation Mono',monospace;font-size:10.6px;letter-spacing:-0.44px;color:#1f1f1f"><span style="color:#8b0a50">DateCreated</span><span style="color:#1f1f1f">: </span><span style="color:#dc362e">"2025-07-</span><span style="background:#0b57d0;color:#fff;padding:2px 0 3px">24</span><span style="color:#dc362e">T16:19:45.3660723"</span></div>
 <div class="t" id="j11" style="left:54.40px;top:167.06px;font-family:'Liberation Mono',monospace;font-size:10.6px;letter-spacing:-0.44px;color:#1f1f1f"><span style="color:#8b0a50">DateCreated1</span><span style="color:#1f1f1f">: </span><span style="color:#dc362e">"2025-07-25T17:12:24.0456753"</span></div>
 <div class="t" id="j12" style="left:54.40px;top:181.44px;font-family:'Liberation Mono',monospace;font-size:10.6px;letter-spacing:-0.44px;color:#1f1f1f"><span style="color:#8b0a50">DatePublished</span><span style="color:#1f1f1f">: </span><span style="color:#80868b">null</span></div>
 <div class="t" id="j13" style="left:54.40px;top:195.82px;font-family:'Liberation Mono',monospace;font-size:10.6px;letter-spacing:-0.44px;color:#1f1f1f"><span style="color:#8b0a50">FieldName</span><span style="color:#1f1f1f">: </span><span style="color:#dc362e">"test"</span></div>
 <div class="t" id="j14" style="left:54.40px;top:210.20px;font-family:'Liberation Mono',monospace;font-size:10.6px;letter-spacing:-0.44px;color:#1f1f1f"><span style="color:#8b0a50">Id</span><span style="color:#1f1f1f">: </span><span style="color:#dc362e">"DE1520EE-0EE1-48EE-8649-33A16EB62AA4"</span></div>
 <div class="t" id="j15" style="left:54.40px;top:224.58px;font-family:'Liberation Mono',monospace;font-size:10.6px;letter-spacing:-0.44px;color:#1f1f1f"><span style="color:#8b0a50">IsPublished</span><span style="color:#1f1f1f">: </span><span style="color:#1a49bd">true</span></div>
 <div class="t" id="j16" style="left:54.40px;top:238.96px;font-family:'Liberation Mono',monospace;font-size:10.6px;letter-spacing:-0.44px;color:#1f1f1f"><span style="color:#8b0a50">LastUpdated</span><span style="color:#1f1f1f">: </span><span style="color:#dc362e">"2025-07-25T17:12:24.0456753"</span></div>
 <svg style="left:0;top:0" width="1005" height="247"><path d="M302.6 113.7 C283.0 118.5 258.0 120.0 238.0 125.0 C223.0 129.0 208.0 135.0 196.0 142.3" fill="none" stroke="#e4211d" stroke-width="3.4" stroke-linecap="round"/><path d="M200.0 130.5 Q199.0 135.0 196.0 142.3 L216.4 142.6" fill="none" stroke="#e4211d" stroke-width="3.4" stroke-linecap="round" stroke-linejoin="round"/></svg>
</div>
<div class="t" id="url" style="left:192.78px;top:19.81px;font-family:'Liberation Sans',sans-serif;font-size:14.4px;font-weight:normal;color:#1f1f1f;transform:scaleX(0.9989);transform-origin:0 0;">testingqa.revalomni.com/AlertConfiguration/AlertNotification/list</div>
<div class="t" id="allbm" style="left:1276.48px;top:57.64px;font-family:'Liberation Sans',sans-serif;font-size:12px;font-weight:normal;color:#1f1f1f;transform:scaleX(0.9773);transform-origin:0 0;">All Bookmarks</div>
<div class="t" id="logo" style="left:59.30px;top:99.53px;font-family:'Liberation Serif',serif;font-size:26px;font-weight:normal;color:#454545;letter-spacing:0.000px;transform:scaleX(0.9);transform-origin:0 0"><span>R</span><span style="font-size:17px">EVAL</span><span>E</span><span style="font-size:17px">RP</span></div>
<div class="t" id="masters" style="left:47.02px;top:155.12px;font-family:'Liberation Sans',sans-serif;font-size:14.5px;font-weight:bold;color:#fff;transform:scaleX(1.0142);transform-origin:0 0;">Masters</div>
<div class="t" id="search" style="left:43.26px;top:193.45px;font-family:'Liberation Sans',sans-serif;font-size:16px;font-weight:normal;color:#6b747c;transform:scaleX(1.0219);transform-origin:0 0;">Search</div>
<div class="t" id="af" style="left:33.67px;top:225.11px;font-family:'Liberation Sans',sans-serif;font-size:14.4px;font-weight:normal;color:#333;transform:scaleX(1.0287);transform-origin:0 0;">Alert Field</div>
<div class="t" id="an" style="left:33.34px;top:255.31px;font-family:'Liberation Sans',sans-serif;font-size:14.4px;font-weight:bold;color:#b06cf0;transform:scaleX(1.0022);transform-origin:0 0;">Alert Notification</div>
<div class="t" id="settings" style="left:47.59px;top:297.02px;font-family:'Liberation Sans',sans-serif;font-size:14.5px;font-weight:bold;color:#2b2b2b;transform:scaleX(0.9789);transform-origin:0 0;">Settings</div>
<div class="t" id="testing" style="left:342.74px;top:104.61px;font-family:'Liberation Sans',sans-serif;font-size:17px;font-weight:normal;color:#4a5660;transform:scaleX(0.9973);transform-origin:0 0;">testing</div>
<div class="t" id="att1" style="left:1091.45px;top:97.05px;font-family:'Liberation Sans',sans-serif;font-size:14px;font-weight:bold;color:#fff;transform:scaleX(0.9933);transform-origin:0 0;">Attendance</div>
<div class="t" id="att2" style="left:1090.88px;top:114.85px;font-family:'Liberation Sans',sans-serif;font-size:14px;font-weight:bold;color:#fff;transform:scaleX(0.9837);transform-origin:0 0;">Login</div>
<div class="t" id="th1" style="left:235.73px;top:198.09px;font-family:'Liberation Sans',sans-serif;font-size:12.3px;font-weight:bold;color:#34424c;transform:scaleX(0.9350);transform-origin:0 0;">Notification Name</div>
<div class="t" id="th2" style="left:385.71px;top:198.09px;font-family:'Liberation Sans',sans-serif;font-size:12.3px;font-weight:bold;color:#34424c;transform:scaleX(0.9629);transform-origin:0 0;">Module Name</div>
<div class="t" id="th3" style="left:511.97px;top:198.09px;font-family:'Liberation Sans',sans-serif;font-size:12.3px;font-weight:bold;color:#34424c;transform:scaleX(0.9442);transform-origin:0 0;">SubModule Name</div>
<div class="t" id="th4" style="left:662.03px;top:198.09px;font-family:'Liberation Sans',sans-serif;font-size:12.3px;font-weight:bold;color:#34424c;transform:scaleX(0.9383);transform-origin:0 0;">FieldName</div>
<div class="t" id="th5" style="left:767.43px;top:198.09px;font-family:'Liberation Sans',sans-serif;font-size:12.3px;font-weight:bold;color:#34424c;transform:scaleX(0.9415);transform-origin:0 0;">Created By / Updated By</div>
<div class="t" id="th6" style="left:979.53px;top:198.09px;font-family:'Liberation Sans',sans-serif;font-size:12.3px;font-weight:bold;color:#34424c;transform:scaleX(0.9415);transform-origin:0 0;">Created By / Updated By</div>
<div class="t" id="th7" style="left:1191.47px;top:198.09px;font-family:'Liberation Sans',sans-serif;font-size:12.3px;font-weight:bold;color:#34424c;transform:scaleX(0.9311);transform-origin:0 0;">Status</div>
<div class="t" id="th8" style="left:1288.71px;top:198.09px;font-family:'Liberation Sans',sans-serif;font-size:12.3px;font-weight:bold;color:#34424c;transform:scaleX(0.9329);transform-origin:0 0;">Action</div>
<div class="t" id="td00" style="left:236.44px;top:227.45px;font-family:'Liberation Sans',sans-serif;font-size:14px;font-weight:normal;color:#4a565f;transform:scaleX(0.9273);transform-origin:0 0;">Water Cooler</div>
<div class="t" id="td01" style="left:385.44px;top:227.45px;font-family:'Liberation Sans',sans-serif;font-size:14px;font-weight:normal;color:#4a565f;transform:scaleX(0.9257);transform-origin:0 0;">HRMS</div>
<div class="t" id="td02" style="left:511.23px;top:227.45px;font-family:'Liberation Sans',sans-serif;font-size:14px;font-weight:normal;color:#4a565f;transform:scaleX(0.9326);transform-origin:0 0;">Role</div>
<div class="t" id="td03" style="left:662.59px;top:227.45px;font-family:'Liberation Sans',sans-serif;font-size:14px;font-weight:normal;color:#4a565f;transform:scaleX(0.9752);transform-origin:0 0;">test</div>
<div class="t" id="tdw0a" style="left:767.15px;top:228.04px;font-family:'Liberation Sans',sans-serif;font-size:13.3px;font-weight:bold;color:#3e4a53;transform:scaleX(0.9514);transform-origin:0 0;">DeviG G</div>
<div class="t" id="tdd0a" style="left:767.33px;top:246.25px;font-family:'Liberation Sans',sans-serif;font-size:14px;font-weight:normal;color:#4a565f;transform:scaleX(0.9500);transform-origin:0 0;">25 Jul 2025 12:03</div>
<div class="t" id="tdw0b" style="left:979.15px;top:228.04px;font-family:'Liberation Sans',sans-serif;font-size:13.3px;font-weight:bold;color:#3e4a53;transform:scaleX(0.9514);transform-origin:0 0;">DeviG G</div>
<div class="t" id="tdd0b" style="left:979.33px;top:246.25px;font-family:'Liberation Sans',sans-serif;font-size:14px;font-weight:normal;color:#4a565f;transform:scaleX(0.9500);transform-origin:0 0;">25 Jul 2025 12:03</div>
<div class="t" id="act0" style="left:1201.28px;top:231.78px;font-family:'Liberation Sans',sans-serif;font-size:13.6px;font-weight:normal;color:#2fa84f;transform:scaleX(0.9092);transform-origin:0 0;">Active</div>
<div class="t" id="td10" style="left:236.29px;top:279.15px;font-family:'Liberation Sans',sans-serif;font-size:14px;font-weight:normal;color:#4a565f;transform:scaleX(0.9752);transform-origin:0 0;">test</div>
<div class="t" id="td11" style="left:385.44px;top:279.15px;font-family:'Liberation Sans',sans-serif;font-size:14px;font-weight:normal;color:#4a565f;transform:scaleX(0.9257);transform-origin:0 0;">HRMS</div>
<div class="t" id="td12" style="left:511.23px;top:279.15px;font-family:'Liberation Sans',sans-serif;font-size:14px;font-weight:normal;color:#4a565f;transform:scaleX(0.9326);transform-origin:0 0;">Role</div>
<div class="t" id="td13" style="left:662.59px;top:279.15px;font-family:'Liberation Sans',sans-serif;font-size:14px;font-weight:normal;color:#4a565f;transform:scaleX(0.9752);transform-origin:0 0;">test</div>
<div class="t" id="tdw1a" style="left:767.17px;top:279.74px;font-family:'Liberation Sans',sans-serif;font-size:13.3px;font-weight:bold;color:#3e4a53;transform:scaleX(0.9344);transform-origin:0 0;">Ramya R</div>
<div class="t" id="tdd1a" style="left:767.34px;top:297.95px;font-family:'Liberation Sans',sans-serif;font-size:14px;font-weight:normal;color:#4a565f;transform:scaleX(0.9313);transform-origin:0 0;">24 Jul 2025 16:19</div>
<div class="t" id="tdw1b" style="left:979.17px;top:279.74px;font-family:'Liberation Sans',sans-serif;font-size:13.3px;font-weight:bold;color:#3e4a53;transform:scaleX(0.9344);transform-origin:0 0;">Ramya R</div>
<div class="t" id="tdd1b" style="left:979.34px;top:297.95px;font-family:'Liberation Sans',sans-serif;font-size:14px;font-weight:normal;color:#4a565f;transform:scaleX(0.9313);transform-origin:0 0;">24 Jul 2025 16:19</div>
<div class="t" id="act1" style="left:1201.28px;top:283.48px;font-family:'Liberation Sans',sans-serif;font-size:13.6px;font-weight:normal;color:#2fa84f;transform:scaleX(0.9092);transform-origin:0 0;">Active</div>
<div class="t" id="dSources" style="left:67.12px;top:354.81px;font-family:'Liberation Sans',sans-serif;font-size:11.8px;font-weight:normal;color:#1f1f1f;transform:scaleX(0.8884);transform-origin:0 0;">Sources</div>
<div class="t" id="dElements" style="left:123.71px;top:354.81px;font-family:'Liberation Sans',sans-serif;font-size:11.8px;font-weight:normal;color:#1f1f1f;transform:scaleX(0.9144);transform-origin:0 0;">Elements</div>
<div class="t" id="dConsole" style="left:186.95px;top:354.81px;font-family:'Liberation Sans',sans-serif;font-size:11.8px;font-weight:normal;color:#1f1f1f;transform:scaleX(0.9130);transform-origin:0 0;">Console</div>
<div class="t" id="dNetwork" style="left:244.55px;top:354.81px;font-family:'Liberation Sans',sans-serif;font-size:11.8px;font-weight:normal;color:#0b57d0;transform:scaleX(0.9805);transform-origin:0 0;">Network</div>
<div class="t" id="dPerf" style="left:304.08px;top:354.81px;font-family:'Liberation Sans',sans-serif;font-size:11.8px;font-weight:normal;color:#1f1f1f;transform:scaleX(0.9461);transform-origin:0 0;">Performance</div>
<div class="t" id="dMemory" style="left:385.02px;top:354.81px;font-family:'Liberation Sans',sans-serif;font-size:11.8px;font-weight:normal;color:#1f1f1f;transform:scaleX(1.0091);transform-origin:0 0;">Memory</div>
<div class="t" id="dApp" style="left:446.48px;top:354.81px;font-family:'Liberation Sans',sans-serif;font-size:11.8px;font-weight:normal;color:#1f1f1f;transform:scaleX(0.9835);transform-origin:0 0;">Application</div>
<div class="t" id="dLight" style="left:520.07px;top:354.81px;font-family:'Liberation Sans',sans-serif;font-size:11.8px;font-weight:normal;color:#1f1f1f;transform:scaleX(0.9601);transform-origin:0 0;">Lighthouse</div>
<div class="t" id="d16" style="left:1238.12px;top:354.81px;font-family:'Liberation Sans',sans-serif;font-size:11.8px;font-weight:normal;color:#1f1f1f;transform:scaleX(0.9823);transform-origin:0 0;">16</div>
<div class="t" id="d3" style="left:1268.60px;top:354.81px;font-family:'Liberation Sans',sans-serif;font-size:11.8px;font-weight:normal;color:#1f1f1f;letter-spacing:-0.300px;">3</div>
<div class="t" id="dPreserve" style="left:139.73px;top:379.11px;font-family:'Liberation Sans',sans-serif;font-size:11.8px;font-weight:normal;color:#1f1f1f;transform:scaleX(0.8944);transform-origin:0 0;">Preserve log</div>
<div class="t" id="dDisable" style="left:232.44px;top:379.11px;font-family:'Liberation Sans',sans-serif;font-size:11.8px;font-weight:normal;color:#1f1f1f;transform:scaleX(0.8854);transform-origin:0 0;">Disable cache</div>
<div class="t" id="dThrottle" style="left:308.53px;top:379.11px;font-family:'Liberation Sans',sans-serif;font-size:11.8px;font-weight:normal;color:#1f1f1f;transform:scaleX(1.0050);transform-origin:0 0;">No throttling</div>
<div class="t" id="dFilter" style="left:29.12px;top:403.81px;font-family:'Liberation Sans',sans-serif;font-size:11.8px;font-weight:normal;color:#474747;transform:scaleX(0.9059);transform-origin:0 0;">Filter</div>
<div class="t" id="dInvert" style="left:626.49px;top:403.81px;font-family:'Liberation Sans',sans-serif;font-size:11.8px;font-weight:normal;color:#1f1f1f;transform:scaleX(0.9317);transform-origin:0 0;">Invert</div>
<div class="t" id="dMore" style="left:680.78px;top:403.81px;font-family:'Liberation Sans',sans-serif;font-size:11.8px;font-weight:normal;color:#1f1f1f;transform:scaleX(0.9498);transform-origin:0 0;">More filters</div>
<div class="t" id="fAll" style="left:770.78px;top:403.81px;font-family:'Liberation Sans',sans-serif;font-size:11.8px;font-weight:normal;color:#1f1f1f;transform:scaleX(0.8942);transform-origin:0 0;">All</div>
<div class="t" id="fXHR" style="left:800.79px;top:403.81px;font-family:'Liberation Sans',sans-serif;font-size:11.8px;font-weight:normal;color:#0a1f44;transform:scaleX(0.8400);transform-origin:0 0;">Fetch/XHR</div>
<div class="t" id="fDoc" style="left:862.66px;top:403.81px;font-family:'Liberation Sans',sans-serif;font-size:11.8px;font-weight:normal;color:#1f1f1f;transform:scaleX(0.8729);transform-origin:0 0;">Doc</div>
<div class="t" id="fCSS" style="left:894.87px;top:403.81px;font-family:'Liberation Sans',sans-serif;font-size:11.8px;font-weight:normal;color:#1f1f1f;transform:scaleX(0.7136);transform-origin:0 0;">CSS</div>
<div class="t" id="fJS" style="left:926.47px;top:403.81px;font-family:'Liberation Sans',sans-serif;font-size:11.8px;font-weight:normal;color:#1f1f1f;transform:scaleX(0.6899);transform-origin:0 0;">JS</div>
<div class="t" id="fFont" style="left:949.85px;top:403.81px;font-family:'Liberation Sans',sans-serif;font-size:11.8px;font-weight:normal;color:#1f1f1f;transform:scaleX(0.8778);transform-origin:0 0;">Font</div>
<div class="t" id="fImg" style="left:984.37px;top:403.81px;font-family:'Liberation Sans',sans-serif;font-size:11.8px;font-weight:normal;color:#1f1f1f;transform:scaleX(0.9483);transform-origin:0 0;">Img</div>
<div class="t" id="fMedia" style="left:1016.45px;top:403.81px;font-family:'Liberation Sans',sans-serif;font-size:11.8px;font-weight:normal;color:#1f1f1f;transform:scaleX(0.8790);transform-origin:0 0;">Media</div>
<div class="t" id="fManifest" style="left:1059.05px;top:403.81px;font-family:'Liberation Sans',sans-serif;font-size:11.8px;font-weight:normal;color:#1f1f1f;transform:scaleX(0.8819);transform-origin:0 0;">Manifest</div>
<div class="t" id="fSocket" style="left:1112.86px;top:403.81px;font-family:'Liberation Sans',sans-serif;font-size:11.8px;font-weight:normal;color:#1f1f1f;transform:scaleX(0.8208);transform-origin:0 0;">Socket</div>
<div class="t" id="fWasm" style="left:1157.26px;top:403.81px;font-family:'Liberation Sans',sans-serif;font-size:11.8px;font-weight:normal;color:#1f1f1f;transform:scaleX(0.8344);transform-origin:0 0;">Wasm</div>
<div class="t" id="fOther" style="left:1198.51px;top:403.81px;font-family:'Liberation Sans',sans-serif;font-size:11.8px;font-weight:normal;color:#1f1f1f;transform:scaleX(0.8728);transform-origin:0 0;">Other</div>
<div class="t" id="dName" style="left:3.78px;top:427.81px;font-family:'Liberation Sans',sans-serif;font-size:11.8px;font-weight:normal;color:#1f1f1f;transform:scaleX(0.9472);transform-origin:0 0;">Name</div>
<div class="t" id="tHeaders" style="left:387.81px;top:428.21px;font-family:'Liberation Sans',sans-serif;font-size:11.8px;font-weight:normal;color:#1f1f1f;transform:scaleX(0.9211);transform-origin:0 0;">Headers</div>
<div class="t" id="tPayload" style="left:446.32px;top:428.21px;font-family:'Liberation Sans',sans-serif;font-size:11.8px;font-weight:normal;color:#1f1f1f;transform:scaleX(0.9117);transform-origin:0 0;">Payload</div>
<div class="t" id="tPreview" style="left:502.80px;top:428.21px;font-family:'Liberation Sans',sans-serif;font-size:11.8px;font-weight:normal;color:#0b57d0;transform:scaleX(0.9286);transform-origin:0 0;">Preview</div>
<div class="t" id="tResponse" style="left:559.54px;top:428.21px;font-family:'Liberation Sans',sans-serif;font-size:11.8px;font-weight:normal;color:#1f1f1f;transform:scaleX(0.8927);transform-origin:0 0;">Response</div>
<div class="t" id="tInitiator" style="left:623.98px;top:428.21px;font-family:'Liberation Sans',sans-serif;font-size:11.8px;font-weight:normal;color:#1f1f1f;transform:scaleX(1.0318);transform-origin:0 0;">Initiator</div>
<div class="t" id="tTiming" style="left:682.14px;top:428.21px;font-family:'Liberation Sans',sans-serif;font-size:11.8px;font-weight:normal;color:#1f1f1f;transform:scaleX(0.9773);transform-origin:0 0;">Timing</div>
<div class="t" id="req0" style="left:21.25px;top:444.56px;font-family:'Liberation Sans',sans-serif;font-size:11.8px;font-weight:normal;color:#1f1f1f;transform:scaleX(0.8927);transform-origin:0 0;">VideoChathub?SiteName=testing&amp;id=UhxQzL7JvlXvE7x46Xp1...</div>
<div class="t" id="req1" style="left:21.25px;top:463.41px;font-family:'Liberation Sans',sans-serif;font-size:11.8px;font-weight:normal;color:#1f1f1f;transform:scaleX(0.8817);transform-origin:0 0;">VideoChathub?SiteName=testing&amp;id=PZz4wZiVFUFC3XRnlJR2...</div>
<div class="t" id="req2" style="left:21.25px;top:482.26px;font-family:'Liberation Sans',sans-serif;font-size:11.8px;font-weight:normal;color:#1f1f1f;transform:scaleX(0.9015);transform-origin:0 0;">VideoChathub?SiteName=testing&amp;id=CNo9emJCN0YHrmHKk...</div>
<div class="t" id="req3" style="left:21.25px;top:501.11px;font-family:'Liberation Sans',sans-serif;font-size:11.8px;font-weight:normal;color:#1f1f1f;transform:scaleX(0.8927);transform-origin:0 0;">VideoChathub?SiteName=testing&amp;id=UhxQzL7JvlXvE7x46Xp1...</div>
<div class="t" id="req4" style="left:21.25px;top:519.96px;font-family:'Liberation Sans',sans-serif;font-size:11.8px;font-weight:normal;color:#1f1f1f;transform:scaleX(0.8817);transform-origin:0 0;">VideoChathub?SiteName=testing&amp;id=PZz4wZiVFUFC3XRnlJR2...</div>
<div class="t" id="req5" style="left:21.25px;top:538.81px;font-family:'Liberation Sans',sans-serif;font-size:11.8px;font-weight:normal;color:#1f1f1f;transform:scaleX(0.9015);transform-origin:0 0;">VideoChathub?SiteName=testing&amp;id=CNo9emJCN0YHrmHKk...</div>
<div class="t" id="req6" style="left:21.25px;top:557.66px;font-family:'Liberation Sans',sans-serif;font-size:11.8px;font-weight:normal;color:#1f1f1f;transform:scaleX(0.8927);transform-origin:0 0;">VideoChathub?SiteName=testing&amp;id=UhxQzL7JvlXvE7x46Xp1...</div>
<div class="t" id="req7" style="left:21.25px;top:576.51px;font-family:'Liberation Sans',sans-serif;font-size:11.8px;font-weight:normal;color:#1f1f1f;transform:scaleX(0.8817);transform-origin:0 0;">VideoChathub?SiteName=testing&amp;id=PZz4wZiVFUFC3XRnlJR2...</div>
<div class="t" id="req8" style="left:21.25px;top:595.36px;font-family:'Liberation Sans',sans-serif;font-size:11.8px;font-weight:normal;color:#1f1f1f;transform:scaleX(0.9015);transform-origin:0 0;">VideoChathub?SiteName=testing&amp;id=CNo9emJCN0YHrmHKk...</div>
<div class="t" id="req9" style="left:21.25px;top:614.21px;font-family:'Liberation Sans',sans-serif;font-size:11.8px;font-weight:normal;color:#1f1f1f;transform:scaleX(0.8927);transform-origin:0 0;">VideoChathub?SiteName=testing&amp;id=UhxQzL7JvlXvE7x46Xp1...</div>
<div class="t" id="req10" style="left:21.25px;top:633.06px;font-family:'Liberation Sans',sans-serif;font-size:11.8px;font-weight:normal;color:#1f1f1f;transform:scaleX(0.8817);transform-origin:0 0;">VideoChathub?SiteName=testing&amp;id=PZz4wZiVFUFC3XRnlJR2...</div>
<div class="t" id="req11" style="left:21.25px;top:651.91px;font-family:'Liberation Sans',sans-serif;font-size:11.8px;font-weight:normal;color:#1f1f1f;transform:scaleX(0.9015);transform-origin:0 0;">VideoChathub?SiteName=testing&amp;id=CNo9emJCN0YHrmHKk...</div>
<div class="t" id="st1" style="left:8.59px;top:674.71px;font-family:'Liberation Sans',sans-serif;font-size:11.8px;font-weight:normal;color:#474747;transform:scaleX(0.9111);transform-origin:0 0;">34 / 71 requests</div>
<div class="t" id="st2" style="left:102.50px;top:674.71px;font-family:'Liberation Sans',sans-serif;font-size:11.8px;font-weight:normal;color:#474747;transform:scaleX(0.8913);transform-origin:0 0;">13.4 kB / 24.4 kB transferred</div>
<div class="a" style="left:250px;top:668px;width:89.5px;height:24px;overflow:hidden"><div class="t" id="st3" style="left:3.30px;top:6.71px;font-family:'Liberation Sans',sans-serif;font-size:11.8px;font-weight:normal;color:#474747;transform:scaleX(0.8913);transform-origin:0 0;">3.7 kB / 15.9 kB resources</div></div>
<div class="t" id="tsearch" style="left:88.08px;top:705.30px;font-family:'Liberation Sans',sans-serif;font-size:15px;font-weight:normal;color:#2a2a2a;transform:scaleX(0.9607);transform-origin:0 0;">Type here to search</div>
<div class="t" id="media" style="left:973.27px;top:704.00px;font-family:'Liberation Sans',sans-serif;font-size:15px;font-weight:normal;color:#fff;transform:scaleX(0.9179);transform-origin:0 0;">Stranger Things 5 tea...</div>
<div class="t" id="eng" style="left:1212.50px;top:705.29px;font-family:'Liberation Sans',sans-serif;font-size:12.3px;font-weight:normal;color:#fff;transform:scaleX(0.8897);transform-origin:0 0;">ENG</div>
<div class="t" id="time" style="left:1253.05px;top:696.29px;font-family:'Liberation Sans',sans-serif;font-size:12.3px;font-weight:normal;color:#fff;transform:scaleX(0.9461);transform-origin:0 0;">04:44 PM</div>
<div class="t" id="date" style="left:1248.32px;top:713.99px;font-family:'Liberation Sans',sans-serif;font-size:12.3px;font-weight:normal;color:#fff;transform:scaleX(0.9420);transform-origin:0 0;">28-07-2025</div>
<div class="t" id="ten" style="left:1333.80px;top:712.92px;font-family:'Liberation Sans',sans-serif;font-size:12.5px;font-weight:normal;color:#fff;letter-spacing:0.000px;">10</div>
</body></html>
